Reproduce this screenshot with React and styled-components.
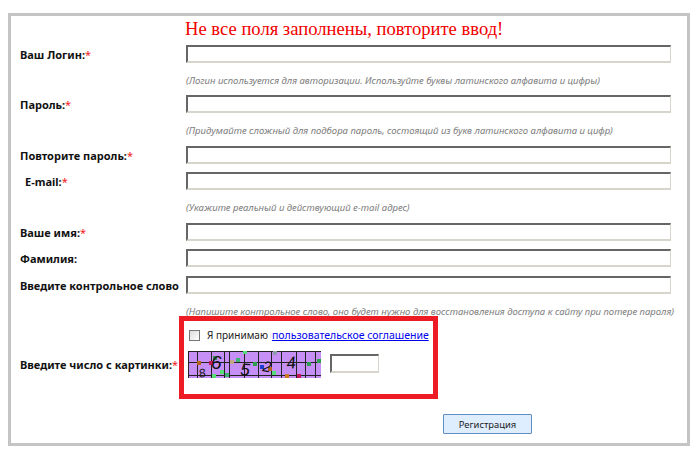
import React from "react";
import styled, { createGlobalStyle } from "styled-components";

const GlobalStyle = createGlobalStyle`
  html, body {
    margin: 0;
    padding: 0;
    background: #fff;
  }
  body {
    font-family: "Noto Sans", "DejaVu Sans", sans-serif;
  }
`;

const Page = styled.div`
  width: 700px;
  height: 453px;
  padding: 13px 10px 7px 8px;
  box-sizing: border-box;
  overflow: hidden;
`;

const Panel = styled.form`
  height: 100%;
  box-sizing: border-box;
  border: 3px solid #c4c4c4;
  padding: 0 16px 0 8px;
  display: flex;
  flex-direction: column;
`;

const Heading = styled.div`
  height: 29px;
  padding-left: 166px;
  font-family: "Liberation Serif", serif;
  font-size: 18.6px;
  line-height: 25px;
  color: #f00000;
  white-space: nowrap;
`;

const Row = styled.div`
  display: grid;
  grid-template-columns: 167px 1fr;
  align-items: center;
  height: 18px;
  margin-bottom: ${(p) => p.$gap || 0}px;
`;

const Label = styled.label`
  font-size: 11px;
  font-weight: 700;
  color: #111;
  white-space: nowrap;
  padding-left: ${(p) => p.$indent || 1}px;
`;

const CaptchaLabel = styled(Label)`
  align-self: start;
  margin-top: 41px;
`;

const Star = styled.span`
  color: #f52020;
  font-weight: 400;
`;

const Field = styled.input`
  display: block;
  box-sizing: border-box;
  width: 100%;
  height: 18px;
  padding: 0;
  background: #fff;
  border-style: solid;
  border-width: 2px 1px 2px 2px;
  border-color: #666 #d8d5cc #d8d5cc #666;
`;

const CaptchaField = styled(Field)`
  width: 49px;
  height: 19px;
  margin-top: 3px;
`;

const HintRow = styled.div`
  padding-left: 167px;
  height: 12px;
  margin: 12px 0 ${(p) => p.$after}px;
  font-size: 9.5px;
  line-height: 12px;
  font-style: italic;
  color: #7d7d7d;
  white-space: nowrap;
`;

const CaptchaRow = styled.div`
  display: grid;
  grid-template-columns: 160px auto;
  justify-content: start;
`;

const RedBox = styled.div`
  width: 259px;
  height: 83px;
  box-sizing: border-box;
  border: 5px solid #ed1c24;
  padding: 5px 0 0 4px;
`;

const AgreeLine = styled.div`
  display: flex;
  align-items: center;
  height: 18px;
  font-size: 10.5px;
  color: #222;
  white-space: nowrap;
`;

const Check = styled.span`
  flex: none;
  display: block;
  box-sizing: border-box;
  width: 11px;
  height: 11px;
  margin: 0 7px 0 1px;
  border: 1px solid #777;
  background: linear-gradient(135deg, #ddd, #fff);
`;

const AgreeText = styled.span`
  font-size: 10px;
`;

const AgreeLink = styled.a`
  margin-left: 4px;
  color: #0000ee;
  text-decoration: underline;
`;

const CaptchaLine = styled.div`
  display: flex;
  align-items: flex-start;
  gap: 9px;
  margin-top: 7px;
`;

const CaptchaImage = styled.svg`
  display: block;
  flex: none;
`;

const Footer = styled.div`
  display: flex;
  padding-left: 424px;
  margin-top: 15px;
`;

const Submit = styled.button`
  width: 89px;
  height: 20px;
  padding: 0;
  font-family: "Noto Sans", sans-serif;
  font-size: 9.4px;
  color: #222;
  background: #deeeff;
  border: 1px solid #5f8fc0;
  border-radius: 1px;
`;

const vlines = [0, 9, 23, 36, 41, 56, 70, 83, 93, 108, 117, 127];
const hlines = [0, 11, 24];
const dots = [
  [11, 12, "#b5651d"], [27, 7, "#2e8b57"], [23, 12, "#c2185b"], [44, 11, "#c4a484"],
  [50, 9, "#3cb371"], [34, 21, "#55dd77"], [39, 24, "#3cb371"], [57, 1, "#55dd77"],
  [67, 13, "#2e9e4f"], [87, 2, "#8e9ab0"], [74, 16, "#1a3fd0"], [86, 22, "#55dd77"],
  [82, 18, "#b5651d"], [99, 25, "#d07a20"], [111, 25, "#c2185b"], [121, 13, "#2e9e4f"],
  [131, 10, "#2e9e4f"], [26, 25, "#55dd77"],
];
const digits = [
  { text: "6", x: 23, y: 18, size: 19, turn: 0 },
  { text: "8", x: 12, y: 27, size: 12, turn: -15 },
  { text: "5", x: 52, y: 24, size: 17, turn: 4 },
  { text: "2", x: 74, y: 20, size: 15, turn: 10 },
  { text: "4", x: 99, y: 18, size: 17, turn: -6 },
];

const Captcha = () => {
  return (
    <CaptchaImage width="133" height="27" viewBox="0 0 133 27">
      <rect width="133" height="27" fill="#c58ff5" />
      {vlines.map((x) => (
        <line key={x} x1={x + 0.5} x2={x + 0.5} y1="0" y2="27" stroke="#222" />
      ))}
      {hlines.map((y) => (
        <line key={y} x1="0" x2="133" y1={y + 0.5} y2={y + 0.5} stroke="#222" />
      ))}
      {dots.map(([x, y, c]) => (
        <rect key={`${x}-${y}`} x={x - 2} y={y - 2} width="4" height="4" fill={c} />
      ))}
      {digits.map((d) => (
        <text
          key={d.text}
          x={d.x}
          y={d.y}
          fontSize={d.size}
          fontStyle="italic"
          fontFamily="Liberation Sans, sans-serif"
          fill="#111"
          transform={`rotate(${d.turn} ${d.x} ${d.y})`}
        >
          {d.text}
        </text>
      ))}
    </CaptchaImage>
  );
};

const App = () => {
  return (
    <Page>
      <GlobalStyle />
      <Panel>
        <Heading>Не все поля заполнены, повторите ввод!</Heading>
        <Row>
          <Label>Ваш Логин:<Star>*</Star></Label>
          <Field />
        </Row>
        <HintRow $after={8}>(Логин используется для авторизации. Используйте буквы латинского алфавита и цифры)</HintRow>
        <Row>
          <Label>Пароль:<Star>*</Star></Label>
          <Field />
        </Row>
        <HintRow $after={9}>(Придумайте сложный для подбора пароль, состоящий из букв латинского алфавита и цифр)</HintRow>
        <Row $gap={8}>
          <Label>Повторите пароль:<Star>*</Star></Label>
          <Field />
        </Row>
        <Row>
          <Label $indent={6}>E-mail:<Star>*</Star></Label>
          <Field />
        </Row>
        <HintRow $after={9}>(Укажите реальный и действующий e-mail адрес)</HintRow>
        <Row $gap={8}>
          <Label>Ваше имя:<Star>*</Star></Label>
          <Field />
        </Row>
        <Row $gap={9}>
          <Label>Фамилия:</Label>
          <Field />
        </Row>
        <Row>
          <Label>Введите контрольное слово</Label>
          <Field />
        </Row>
        <HintRow $after={-2}>(Напишите контрольное слово, оно будет нужно для восстановления доступа к сайту при потере пароля)</HintRow>
        <CaptchaRow>
          <CaptchaLabel>Введите число с картинки:<Star>*</Star></CaptchaLabel>
          <RedBox>
            <AgreeLine>
              <Check />
              <AgreeText>Я принимаю</AgreeText>
              <AgreeLink>пользовательское соглашение</AgreeLink>
            </AgreeLine>
            <CaptchaLine>
              <Captcha />
              <CaptchaField />
            </CaptchaLine>
          </RedBox>
        </CaptchaRow>
        <Footer>
          <Submit type="button">Регистрация</Submit>
        </Footer>
      </Panel>
    </Page>
  );
};

export default App;
